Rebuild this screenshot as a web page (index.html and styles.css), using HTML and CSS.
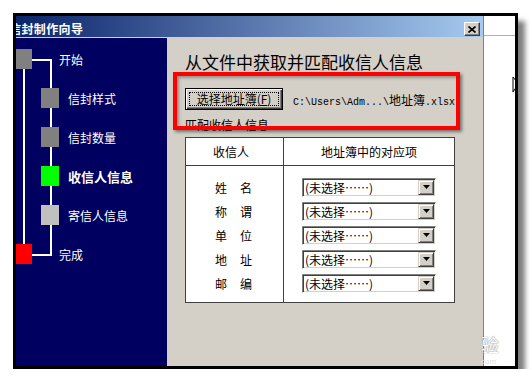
FILE: index.html
```html
<!DOCTYPE html>
<html lang="zh-CN">
<head>
<meta charset="utf-8">
<title>信封制作向导</title>
<link rel="stylesheet" href="styles.css">
</head>
<body>
<div class="frame">
  <div class="dialog">
    <div class="titlebar">
      <span class="title">信封制作向导</span>
      <span class="close"><svg width="8" height="7" viewBox="0 0 8 7"><path d="M0.5 0.5 L7.5 6.5 M7.5 0.5 L0.5 6.5" stroke="#000" stroke-width="1.6"/></svg></span>
    </div>
    <div class="dialog-body">
      <nav class="steps">
        <svg class="connectors" width="151" height="240" viewBox="0 0 151 240">
          <path d="M16 22 H36 M35 22 V217 M16 217 H36 M8 31 V206" stroke="#fff" stroke-width="2" fill="none"/>
        </svg>
        <div class="step step-main"><span class="box box-gray"></span><span class="label">开始</span></div>
        <div class="step step-sub"><span class="box box-gray"></span><span class="label">信封样式</span></div>
        <div class="step step-sub"><span class="box box-gray"></span><span class="label">信封数量</span></div>
        <div class="step step-sub step-current"><span class="box box-current"></span><span class="label">收信人信息</span></div>
        <div class="step step-sub"><span class="box box-light"></span><span class="label">寄信人信息</span></div>
        <div class="step step-main"><span class="box box-end"></span><span class="label">完成</span></div>
      </nav>
      <main class="content">
        <h1 class="heading">从文件中获取并匹配收信人信息</h1>
        <div class="picker">
          <button class="pick-btn"><span class="focus">选择地址簿(<u>F</u>)</span></button>
          <span class="path">C:\Users\Adm...\<span class="path-cjk">地址簿</span>.xlsx</span>
        </div>
        <div class="group-label">匹配收信人信息</div>
        <div class="map-table">
          <div class="col col-field">
            <div class="th th-field">收信人</div>
            <div class="tbody">
              <div class="tr field"><span>姓</span><span>名</span></div>
              <div class="tr field"><span>称</span><span>谓</span></div>
              <div class="tr field"><span>单</span><span>位</span></div>
              <div class="tr field"><span>地</span><span>址</span></div>
              <div class="tr field"><span>邮</span><span>编</span></div>
            </div>
          </div>
          <div class="col col-value">
            <div class="th th-value">地址簿中的对应项</div>
            <div class="tbody">
              <div class="tr"><div class="combo"><span class="combo-text">(未选择……)</span><span class="combo-arrow"><svg width="7" height="4" viewBox="0 0 7 4"><path d="M0 0 H7 L3.5 4 Z" fill="#000"/></svg></span></div></div>
              <div class="tr"><div class="combo"><span class="combo-text">(未选择……)</span><span class="combo-arrow"><svg width="7" height="4" viewBox="0 0 7 4"><path d="M0 0 H7 L3.5 4 Z" fill="#000"/></svg></span></div></div>
              <div class="tr"><div class="combo"><span class="combo-text">(未选择……)</span><span class="combo-arrow"><svg width="7" height="4" viewBox="0 0 7 4"><path d="M0 0 H7 L3.5 4 Z" fill="#000"/></svg></span></div></div>
              <div class="tr"><div class="combo"><span class="combo-text">(未选择……)</span><span class="combo-arrow"><svg width="7" height="4" viewBox="0 0 7 4"><path d="M0 0 H7 L3.5 4 Z" fill="#000"/></svg></span></div></div>
              <div class="tr"><div class="combo"><span class="combo-text">(未选择……)</span><span class="combo-arrow"><svg width="7" height="4" viewBox="0 0 7 4"><path d="M0 0 H7 L3.5 4 Z" fill="#000"/></svg></span></div></div>
            </div>
          </div>
        </div>
        <div class="highlight"></div>
      </main>
    </div>
  </div>
  <div class="backdrop">
    <div class="backdrop-line"></div>
    <svg class="cursor" width="6" height="18" viewBox="0 0 6 18"><path d="M1 1 L5 6 V10 L1 16 Z" fill="#fff" stroke="#000" stroke-width="1"/></svg>
  </div>
  <div class="watermark"><span class="wm-char">验</span><span class="wm-sub">com</span></div>
</div>
</body>
</html>
```
FILE: styles.css
```css
* { box-sizing: border-box; }
html, body { margin: 0; padding: 0; background: #fff; }
body {
  font-family: "Noto Sans CJK SC", "Noto Sans", sans-serif;
  font-size: 12px;
  color: #000;
}
.frame {
  position: relative;
  margin: 13px 0 0 13px;
  width: 505px;
  height: 356px;
  border: 3px solid #000;
  display: flex;
  overflow: hidden;
  box-shadow: 7px 8px 5px rgba(0, 0, 0, 0.5);
}
.dialog {
  width: 468px;
  display: flex;
  flex-direction: column;
  background: #d4d0c8;
  border-right: 1px solid #808080;
}
.titlebar {
  height: 21px;
  flex: none;
  background: linear-gradient(to right, #0a246a, #a6caf0);
  display: flex;
  align-items: flex-end;
  justify-content: space-between;
  padding-bottom: 1px;
  overflow: hidden;
}
.title {
  color: #fff;
  font-weight: bold;
  font-size: 12px;
  line-height: 15px;
  margin-left: -7px;
  letter-spacing: 0.4px;
  white-space: nowrap;
}
.close {
  width: 16px;
  height: 14px;
  margin-right: 3px;
  background: #d4d0c8;
  border: 1px solid;
  border-color: #fff #404040 #404040 #fff;
  box-shadow: inset -1px -1px #808080;
  display: flex;
  align-items: center;
  justify-content: center;
}
.close svg { display: block; }
.dialog-body {
  flex: 1;
  margin-top: 1px;
  display: flex;
}
.steps {
  width: 151px;
  flex: none;
  background: #000060;
  position: relative;
  padding-top: 11px;
  display: flex;
  flex-direction: column;
  gap: 19px;
}
.connectors { position: absolute; left: 0; top: 0; }
.step {
  position: relative;
  display: flex;
  align-items: center;
  height: 20px;
  color: #fff;
  font-size: 12px;
  white-space: nowrap;
}
.box { display: block; flex: none; }
.step-main .box { width: 16px; height: 20px; margin-right: 27px; }
.step-sub { padding-left: 25px; }
.step-sub .box { width: 18px; height: 20px; margin-right: 9px; }
.box-gray { background: #808080; }
.box-light { background: #c0c0c0; }
.box-current { background: #00ff00; }
.box-end { background: #ff0000; }
.step-current .label { font-weight: bold; font-size: 13px; }

.content {
  flex: 1;
  position: relative;
  padding: 14px 0 0 18px;
}
.heading {
  margin: 0;
  font-size: 17px;
  font-weight: normal;
  line-height: 20px;
  white-space: nowrap;
}
.picker {
  margin-top: 16px;
  height: 22px;
  display: flex;
  align-items: center;
}
.pick-btn {
  width: 98px;
  height: 22px;
  padding: 3px;
  background: #d4d0c8;
  border: 1px solid #000;
  box-shadow: inset 1px 1px #fff, inset -1px -1px #404040, inset -2px -2px #808080;
  font-family: "Noto Sans CJK SC", "Noto Sans", sans-serif;
  font-size: 12px;
  color: #000;
  display: flex;
}
.focus {
  flex: 1;
  border: 1px dotted #000;
  display: flex;
  align-items: center;
  justify-content: center;
  line-height: 12px;
  white-space: nowrap;
}
.path {
  margin-left: 10px;
  font-family: "Liberation Mono", monospace;
  font-size: 10px;
  white-space: nowrap;
}
.path-cjk {
  font-family: "Noto Sans CJK SC", sans-serif;
  font-size: 12px;
}
.group-label {
  margin-top: 8px;
  line-height: 14px;
}
.map-table {
  margin-top: 5px;
  width: 270px;
  height: 166px;
  border: 1px solid #404040;
  background: #fff;
  display: flex;
}
.col { display: flex; flex-direction: column; }
.col-field { width: 98px; border-right: 1px solid #404040; }
.col-value { flex: 1; }
.th {
  height: 28px;
  border-bottom: 1px solid #404040;
  display: flex;
  align-items: center;
}
.th-field { padding-left: 27px; }
.th-value { justify-content: center; }
.tbody { padding: 9px 0 7px; }
.tr {
  height: 24px;
  display: flex;
  align-items: center;
}
.field { padding-left: 29px; gap: 13px; }
.combo {
  margin-left: 18px;
  width: 134px;
  height: 19px;
  padding: 1px;
  border: 1px solid;
  border-color: #808080 #fff #fff #808080;
  box-shadow: inset 1px 1px #404040, inset -1px -1px #d4d0c8;
  background: #fff;
  display: flex;
}
.combo-text {
  flex: 1;
  padding-left: 1px;
  line-height: 15px;
  white-space: nowrap;
  overflow: hidden;
}
.combo-arrow {
  width: 16px;
  height: 15px;
  background: #d4d0c8;
  border: 1px solid;
  border-color: #d4d0c8 #404040 #404040 #d4d0c8;
  box-shadow: inset 1px 1px #fff, inset -1px -1px #808080;
  display: flex;
  align-items: center;
  justify-content: center;
}
.combo-arrow svg { display: block; }
.highlight {
  position: absolute;
  left: 6px;
  top: 34px;
  width: 287px;
  height: 58px;
  border: 4px solid #ff0000;
  box-shadow: 2px 2px 3px rgba(0, 0, 0, 0.45), inset 2px 2px 3px rgba(0, 0, 0, 0.3);
  pointer-events: none;
}
.backdrop {
  flex: 1;
  background: #fff;
  position: relative;
}
.backdrop-line {
  height: 20px;
  border-bottom: 1px solid #b0b0b0;
}
.cursor { position: absolute; left: 28px; top: 60px; }
.watermark {
  position: absolute;
  left: 465px;
  top: 318px;
  display: flex;
  flex-direction: column;
  align-items: flex-start;
  pointer-events: none;
}
.wm-char {
  font-size: 18px;
  line-height: 20px;
  color: #fff;
  text-shadow: 0 0 1px #8a8a8a, 0 0 1px #8a8a8a;
}
.wm-sub {
  font-family: "Liberation Sans", sans-serif;
  font-size: 8px;
  line-height: 9px;
  color: #e0e0e0;
  margin-top: 3px;
}
```
